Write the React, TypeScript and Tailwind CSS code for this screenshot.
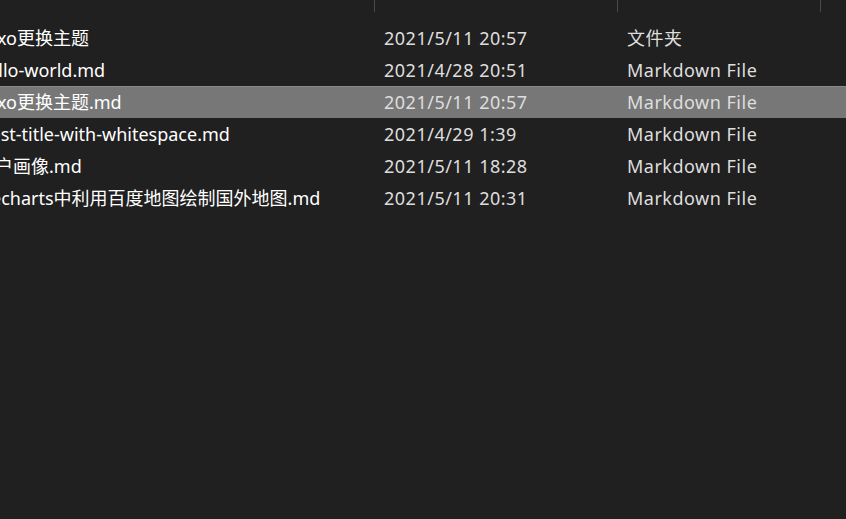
import React from "react";

type Row = { name: string; off: string; date: string; type: string; selected?: boolean };

const rows: Row[] = [
  { name: "hexo更换主题", off: "ml-[-24px]", date: "2021/5/11 20:57", type: "文件夹" },
  { name: "hello-world.md", off: "ml-[-23px]", date: "2021/4/28 20:51", type: "Markdown File" },
  { name: "hexo更换主题.md", off: "ml-[-24px]", date: "2021/5/11 20:57", type: "Markdown File", selected: true },
  { name: "test-title-with-whitespace.md", off: "ml-[-16px]", date: "2021/4/29 1:39", type: "Markdown File" },
  { name: "用户画像.md", off: "ml-[-23px]", date: "2021/5/11 18:28", type: "Markdown File" },
  { name: "echarts中利用百度地图绘制国外地图.md", off: "ml-[-9px]", date: "2021/5/11 20:31", type: "Markdown File" },
];

export default function App() {
  return (
    <div
      className="w-[846px] h-[519px] bg-[#202020] overflow-hidden text-[18px] leading-[32px] tracking-[0.5px]"
      style={{ fontFamily: '"Noto Sans", "Noto Sans CJK SC", sans-serif' }}
    >
      {/* header */}
      <div className="flex h-[22px] text-[#dcdcdc]">
        <div className="w-[374px] shrink-0" />
        <div className="w-[243px] shrink-0 h-[12px] border-l border-[#4a4a4a] overflow-hidden">
          <div className="pl-[10px] mt-[-26px] leading-[32px]">修改日期</div>
        </div>
        <div className="w-[203px] shrink-0 h-[12px] border-l border-[#4a4a4a] overflow-hidden">
          <div className="pl-[10px] mt-[-26px] leading-[32px]">类型</div>
        </div>
        <div className="flex-1 h-[12px] border-l border-[#4a4a4a] overflow-hidden">
          <div className="pl-[10px] mt-[-26px] leading-[32px]">大小</div>
        </div>
      </div>
      {/* rows */}
      <div className="flex flex-col">
        {rows.map((r, i) => (
          <div
            key={i}
            className={
              r.selected
                ? "flex h-[32px] bg-[#777777] border-t border-[#8a8a8a] items-center pb-[1px]"
                : "flex h-[32px] items-center"
            }
          >
            <div className="w-[384px] shrink-0 overflow-visible whitespace-nowrap">
              <span className={"inline-block text-white tracking-normal " + r.off}>{r.name}</span>
            </div>
            <div className="w-[243px] shrink-0 whitespace-nowrap text-[#dedede]">{r.date}</div>
            <div className="flex-1 whitespace-nowrap text-[#dedede]">{r.type}</div>
          </div>
        ))}
      </div>
    </div>
  );
}
